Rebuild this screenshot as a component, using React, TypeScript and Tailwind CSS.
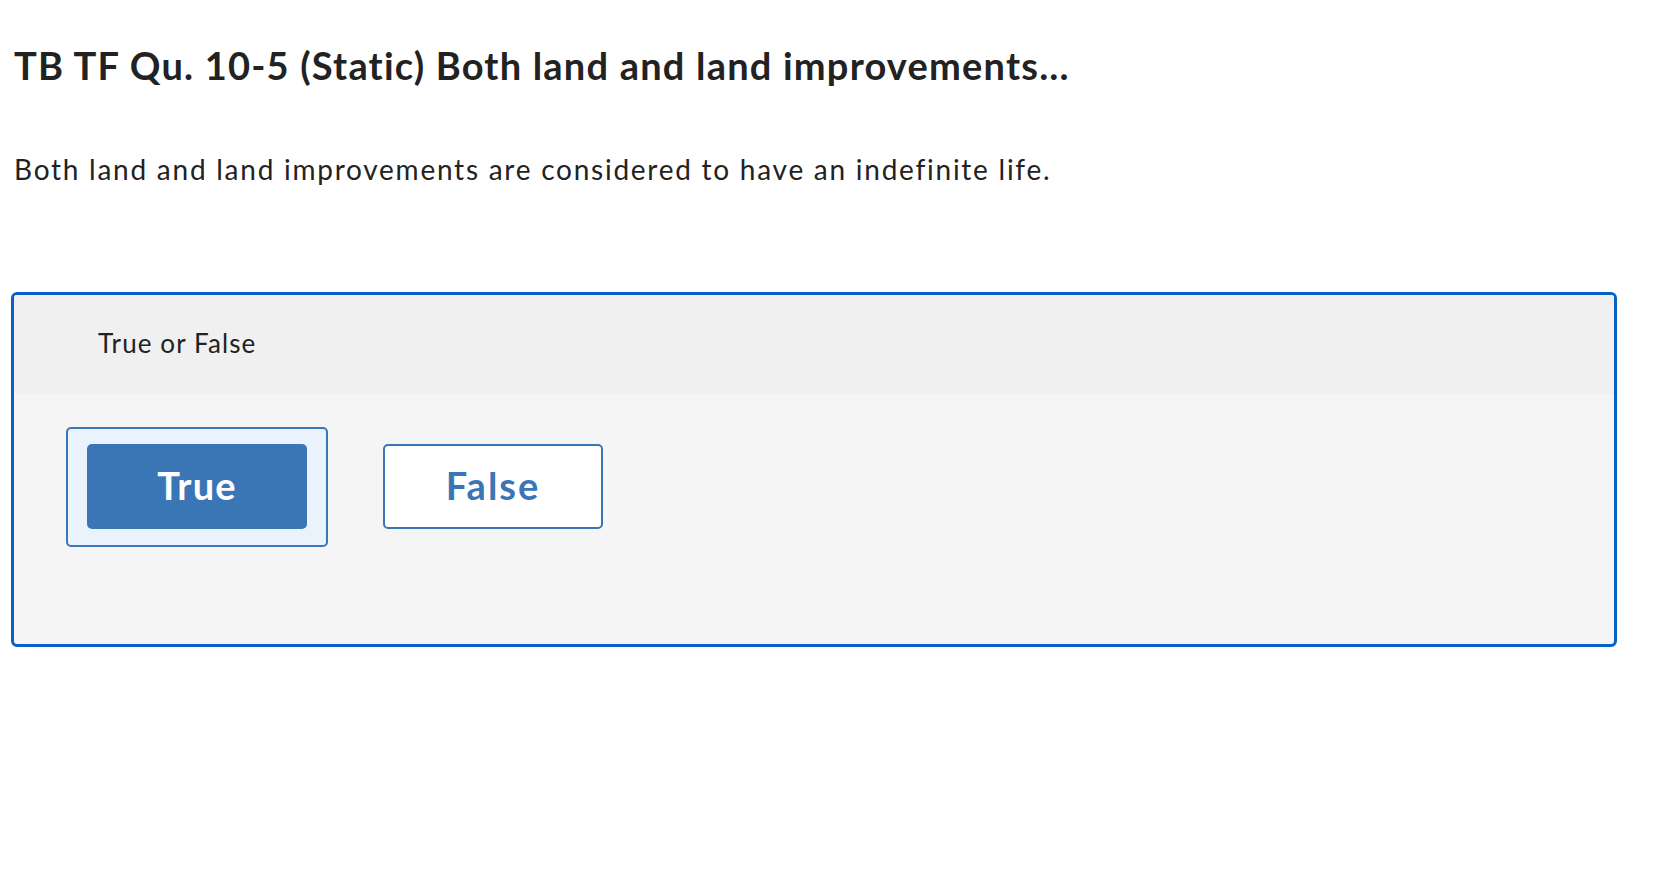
import React from "react";

type OptionProps = {
  label: string;
  selected?: boolean;
};

function Option({ label, selected = false }: OptionProps) {
  return (
    <div
      className={
        selected
          ? "rounded-[5px] border-2 border-[#3b77b8] bg-[#eaf2fb] px-[19px] pt-[15px] pb-[16px]"
          : "rounded-[5px] border-2 border-transparent px-[19px] pt-[15px] pb-[16px]"
      }
    >
      <button
        type="button"
        className={
          selected
            ? "flex h-[85px] w-[220px] items-center justify-center rounded-[5px] bg-[#3a75b5] pb-[4px] text-[38px] font-bold leading-none tracking-[1.2px] text-white"
            : "flex h-[85px] w-[220px] items-center justify-center rounded-[5px] border-2 border-[#3a75b5] bg-white pb-[4px] text-[38px] font-bold leading-none tracking-[2px] text-[#3a75b5]"
        }
      >
        {label}
      </button>
    </div>
  );
}

export default function App() {
  return (
    <div className="min-h-screen bg-white font-['Lato','Open_Sans',sans-serif] text-[#222222]">
      <div className="ml-[11px] w-[1606px] pt-[46px]">
        <h1 className="pl-[3px] text-[38px] font-bold leading-none tracking-[1.2px]">
          TB TF Qu. 10-5 (Static) Both land and land improvements...
        </h1>
        <p className="mt-[71px] pl-[3px] text-[28px] leading-none tracking-[1.75px]">
          Both land and land improvements are considered to have an indefinite life.
        </p>

        {/* Question box */}
        <div className="mt-[109px] overflow-hidden rounded-[6px] border-[3px] border-[#0860c8] bg-[#f5f5f5]">
          <div className="flex h-[99px] items-center bg-[#f0f0f0] pb-[3px] pl-[84px] text-[26px] leading-none tracking-[1.1px]">
            True or False
          </div>
          <div className="flex gap-[34px] pl-[52px] pt-[33px] pb-[97px]">
            <Option label="True" selected />
            <Option label="False" />
          </div>
        </div>
      </div>
    </div>
  );
}
